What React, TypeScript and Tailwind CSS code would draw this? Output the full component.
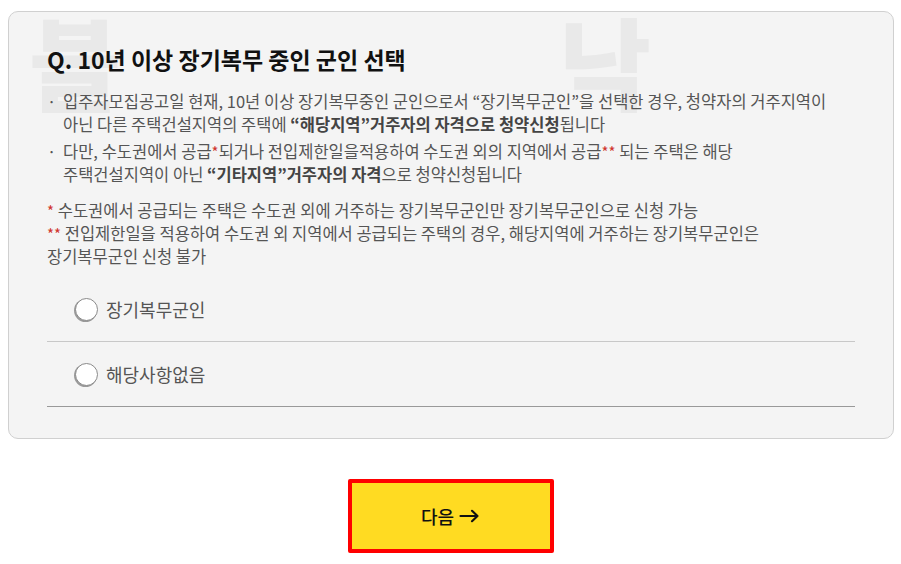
import React from "react";

const font = { fontFamily: '"Noto Sans CJK KR", "Noto Sans", sans-serif' };

function Star({ n = 1 }: { n?: number }) {
  return <span className="text-[15px] text-[#d0342c]">{"*".repeat(n)}</span>;
}

function Radio({ label }: { label: string }) {
  return (
    <label className="flex h-[64px] items-center gap-[8px] pl-[28px]">
      <span className="h-[23px] w-[23px] rounded-full border border-[#8a8a8a] bg-white shadow-[-1px_1px_0_#9a9a9a]" />
      <span className="text-[18px] text-[#555]">{label}</span>
    </label>
  );
}

export default function App() {
  return (
    <div className="min-h-[564px] bg-white pt-[11px]" style={font}>
      <section className="relative ml-[8px] w-[886px] overflow-hidden rounded-[10px] border border-[#d0d0d0] bg-[#f4f4f4] px-[38px] pb-[31px] pt-[32px]">
        {/* watermark */}
        <span className="pointer-events-none absolute left-[20px] top-[-2px] select-none text-[100px] font-black leading-none text-[#e9e9e9]">
          블
        </span>
        <span className="pointer-events-none absolute left-[550px] top-[-2px] select-none text-[100px] font-black leading-none text-[#e9e9e9]">
          낙
        </span>

        <div className="relative">
          <h2 className="text-[23px] font-bold leading-[30px] text-[#111]">
            Q. 10년 이상 장기복무 중인 군인 선택
          </h2>

          <ul className="mt-[16px] text-[16.5px] leading-[23px] text-[#555]">
            <li className="flex">
              <span className="w-[16px] flex-shrink-0">·</span>
              <span className="whitespace-nowrap">
                입주자모집공고일 현재, 10년 이상 장기복무중인 군인으로서 “장기복무군인”을 선택한 경우, 청약자의 거주지역이
                <br />
                아닌 다른 주택건설지역의 주택에 <b className="text-[#444]">“해당지역”거주자의 자격으로 청약신청</b>됩니다
              </span>
            </li>
            <li className="mt-[4px] flex">
              <span className="w-[16px] flex-shrink-0">·</span>
              <span className="whitespace-nowrap">
                다만, 수도권에서 공급<Star />되거나 전입제한일을적용하여 수도권 외의 지역에서 공급<Star n={2} /> 되는 주택은 해당
                <br />
                주택건설지역이 아닌 <b className="text-[#444]">“기타지역”거주자의 자격</b>으로 청약신청됩니다
              </span>
            </li>
          </ul>

          <div className="mt-[13px] whitespace-nowrap text-[16.5px] leading-[23px] text-[#555]">
            <p>
              <Star /> 수도권에서 공급되는 주택은 수도권 외에 거주하는 장기복무군인만 장기복무군인으로 신청 가능
            </p>
            <p>
              <Star n={2} /> 전입제한일을 적용하여 수도권 외 지역에서 공급되는 주택의 경우, 해당지역에 거주하는 장기복무군인은
              <br />
              장기복무군인 신청 불가
            </p>
          </div>

          <div className="mt-[9px]">
            <div className="border-b border-[#c8c8c8]">
              <Radio label="장기복무군인" />
            </div>
            <div className="border-b border-[#999]">
              <Radio label="해당사항없음" />
            </div>
          </div>
        </div>
      </section>

      <div className="mt-[40px] flex justify-center">
        <button className="flex h-[74px] w-[206px] items-center justify-center gap-[5px] rounded-[2px] border-[4px] border-[#ff0000] bg-[#ffdb22] text-[18px] font-medium text-[#111]">
          다음
          <svg width="21" height="14" viewBox="0 0 21 14" fill="none" stroke="#111" strokeWidth="2.2" strokeLinecap="round" strokeLinejoin="round">
            <path d="M1.5 7h17M13 1.8 18.5 7 13 12.2" />
          </svg>
        </button>
      </div>
    </div>
  );
}
